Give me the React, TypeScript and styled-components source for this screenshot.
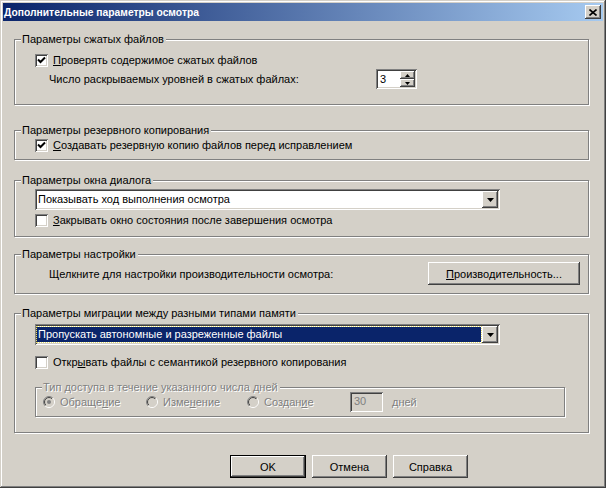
import React, { useId } from "react";
import styled, { createGlobalStyle, css } from "styled-components";

const GlobalStyle = createGlobalStyle`
  html, body {
    margin: 0;
    padding: 0;
    background: #d4d0c8;
  }
  body {
    font-family: "Liberation Sans", Arial, sans-serif;
    font-size: 11px;
    color: #000;
  }
`;

const raised = css`
  box-shadow: inset -1px -1px #404040, inset 1px 1px #fff,
    inset -2px -2px #808080, inset 2px 2px #d4d0c8;
`;

const sunken = css`
  box-shadow: inset 1px 1px #808080, inset -1px -1px #fff,
    inset 2px 2px #404040, inset -2px -2px #d4d0c8;
`;

const Window = styled.div`
  width: 606px;
  height: 488px;
  box-sizing: border-box;
  padding: 3px;
  background: #d4d0c8;
  box-shadow: inset -1px -1px #404040, inset 1px 1px #d4d0c8,
    inset -2px -2px #808080, inset 2px 2px #fff;
  display: flex;
  flex-direction: column;
`;

const TitleBar = styled.div`
  height: 18px;
  display: flex;
  align-items: center;
  justify-content: space-between;
  padding: 0 2px 0 1px;
  background: linear-gradient(to right, #0a246a, #a6caf0);
`;

const Title = styled.span`
  color: #fff;
  font-weight: bold;
  font-size: 10.3px;
`;

const CloseButton = styled.div`
  width: 16px;
  height: 14px;
  background: #d4d0c8;
  display: flex;
  align-items: center;
  justify-content: center;
  ${raised}
`;

const Content = styled.div`
  display: flex;
  flex-direction: column;
  padding: 18px 14px 0 11px;
`;

const Group = styled.div<{ $mt: number; $h: number; $w?: number }>`
  position: relative;
  box-sizing: border-box;
  margin-top: ${(p) => p.$mt}px;
  height: ${(p) => p.$h}px;
  width: ${(p) => (p.$w ? `${p.$w}px` : "auto")};
  border: 1px solid #808080;
  box-shadow: inset 1px 1px #fff, 1px 1px #fff;
  padding-left: ${(p) => (p.$w ? 7 : 20)}px;
  display: flex;
  flex-direction: column;
`;

const Legend = styled.span<{ $disabled?: boolean }>`
  position: absolute;
  top: -8px;
  left: 6px;
  padding: 0 2px 0 1px;
  line-height: 14px;
  background: #d4d0c8;
  color: ${(p) => (p.$disabled ? "#808080" : "#000")};
  text-shadow: ${(p) => (p.$disabled ? "1px 1px 0 #fff" : "none")};
`;

const CheckRow = styled.div<{ $mt: number }>`
  display: flex;
  align-items: center;
  gap: 5px;
  height: 16px;
  margin-top: ${(p) => p.$mt}px;
`;

const CheckBox = styled.div`
  width: 13px;
  height: 13px;
  box-sizing: border-box;
  background: #fff;
  display: flex;
  align-items: center;
  justify-content: center;
  ${sunken}
`;

const FieldRow = styled.div<{ $mt: number; $h: number }>`
  display: flex;
  align-items: center;
  height: ${(p) => p.$h}px;
  margin-top: ${(p) => p.$mt}px;
  padding-left: 14px;
`;

const FieldLabel = styled.span<{ $w: number }>`
  width: ${(p) => p.$w}px;
  flex: none;
`;

const U = styled.span`
  text-decoration: underline;
  text-underline-offset: 1px;
`;

const Spin = styled.div`
  width: 41px;
  height: 20px;
  box-sizing: border-box;
  background: #fff;
  padding: 2px;
  display: flex;
  ${sunken}
`;

const SpinValue = styled.span`
  flex: 1;
  padding-left: 2px;
  line-height: 16px;
`;

const SpinButtons = styled.div`
  width: 15px;
  display: flex;
  flex-direction: column;
`;

const SpinButton = styled.div`
  flex: 1;
  background: #d4d0c8;
  display: flex;
  align-items: center;
  justify-content: center;
  ${raised}
`;

const Combo = styled.div<{ $mt: number }>`
  width: 465px;
  height: 21px;
  box-sizing: border-box;
  margin-top: ${(p) => p.$mt}px;
  padding: 2px;
  background: #fff;
  display: flex;
  ${sunken}
`;

const ComboText = styled.div<{ $selected?: boolean }>`
  flex: 1;
  margin: 1px 1px 1px 0;
  padding-left: 1px;
  line-height: 15px;
  white-space: nowrap;
  background: ${(p) => (p.$selected ? "#0a246a" : "transparent")};
  color: ${(p) => (p.$selected ? "#fff" : "#000")};
  outline: ${(p) => (p.$selected ? "1px dotted #e8e070" : "none")};
`;

const ComboButton = styled.div`
  width: 16px;
  background: #d4d0c8;
  display: flex;
  align-items: center;
  justify-content: center;
  ${raised}
`;

const PushButton = styled.div<{ $w: number; $default?: boolean }>`
  width: ${(p) => p.$w}px;
  height: 23px;
  box-sizing: border-box;
  display: flex;
  align-items: center;
  justify-content: center;
  background: #d4d0c8;
  ${raised}
  ${(p) =>
    p.$default &&
    css`
      border: 1px solid #000;
    `}
`;

const RadioRow = styled.div`
  display: flex;
  align-items: center;
  height: 20px;
  margin-top: 4px;
`;

const RadioItem = styled.div<{ $w: number }>`
  width: ${(p) => p.$w}px;
  display: flex;
  align-items: center;
  gap: 5px;
`;

const DisabledText = styled.span`
  color: #808080;
  text-shadow: 1px 1px 0 #fff;
`;

const DaysInput = styled.div`
  width: 33px;
  height: 20px;
  box-sizing: border-box;
  padding: 3px 0 0 4px;
  background: #d4d0c8;
  color: #808080;
  ${sunken}
`;

const DaysLabel = styled(DisabledText)`
  margin-left: 9px;
`;

const ButtonRow = styled.div`
  display: flex;
  gap: 6px;
  margin-top: 22px;
  padding-left: 216px;
`;

function Check({ checked }: { checked: boolean }) {
  return (
    <CheckBox>
      {checked && (
        <svg width="9" height="9" viewBox="0 0 9 9">
          <path d="M1 3.5 L3.5 6 L8 1.5" stroke="#000" strokeWidth="2" fill="none" />
        </svg>
      )}
    </CheckBox>
  );
}

function Radio({ checked }: { checked: boolean }) {
  const id = useId().replace(/:/g, "");
  return (
    <svg width="12" height="12" viewBox="0 0 12 12">
      <defs>
        <linearGradient id={`o${id}`} x1="0" y1="0" x2="1" y2="1">
          <stop offset="0.5" stopColor="#808080" />
          <stop offset="0.5" stopColor="#fff" />
        </linearGradient>
        <linearGradient id={`i${id}`} x1="0" y1="0" x2="1" y2="1">
          <stop offset="0.5" stopColor="#404040" />
          <stop offset="0.5" stopColor="#d4d0c8" />
        </linearGradient>
      </defs>
      <circle cx="6" cy="6" r="5.5" fill="none" stroke={`url(#o${id})`} />
      <circle cx="6" cy="6" r="4.5" fill="#d4d0c8" stroke={`url(#i${id})`} />
      {checked && <circle cx="6" cy="6" r="2" fill="#808080" />}
    </svg>
  );
}

function Arrow({ w, h }: { w: number; h: number }) {
  return (
    <svg width={w} height={h} viewBox={`0 0 ${w} ${h}`}>
      <path d={`M0 0 H${w} L${w / 2} ${h} Z`} fill="#000" />
    </svg>
  );
}

export default function App() {
  return (
    <>
      <GlobalStyle />
      <Window>
        <TitleBar>
          <Title>Дополнительные параметры осмотра</Title>
          <CloseButton>
            <svg width="8" height="7" viewBox="0 0 8 7">
              <path d="M0.5 0.5 L7.5 6.5 M7.5 0.5 L0.5 6.5" stroke="#000" strokeWidth="1.6" />
            </svg>
          </CloseButton>
        </TitleBar>
        <Content>
          <Group $mt={0} $h={66}>
            <Legend>Параметры сжатых файлов</Legend>
            <CheckRow $mt={12}>
              <Check checked />
              <span>
                <U>П</U>роверять содержимое сжатых файлов
              </span>
            </CheckRow>
            <FieldRow $mt={1} $h={20}>
              <FieldLabel $w={327}>Число раскрываемых уровней в сжатых файлах:</FieldLabel>
              <Spin>
                <SpinValue>3</SpinValue>
                <SpinButtons>
                  <SpinButton>
                    <svg width="5" height="3" viewBox="0 0 5 3">
                      <path d="M0 3 H5 L2.5 0 Z" fill="#000" />
                    </svg>
                  </SpinButton>
                  <SpinButton>
                    <Arrow w={5} h={3} />
                  </SpinButton>
                </SpinButtons>
              </Spin>
            </FieldRow>
          </Group>

          <Group $mt={25} $h={30}>
            <Legend>Параметры резервного копирования</Legend>
            <CheckRow $mt={6}>
              <Check checked />
              <span>
                <U>С</U>оздавать резервную копию файлов перед исправлением
              </span>
            </CheckRow>
          </Group>

          <Group $mt={20} $h={57}>
            <Legend>Параметры окна диалога</Legend>
            <Combo $mt={8}>
              <ComboText>Показывать ход выполнения осмотра</ComboText>
              <ComboButton>
                <Arrow w={7} h={4} />
              </ComboButton>
            </Combo>
            <CheckRow $mt={2}>
              <Check checked={false} />
              <span>
                <U>З</U>акрывать окно состояния после завершения осмотра
              </span>
            </CheckRow>
          </Group>

          <Group $mt={17} $h={40}>
            <Legend>Параметры настройки</Legend>
            <FieldRow $mt={7} $h={23}>
              <FieldLabel $w={379}>Щелкните для настройки производительности осмотра:</FieldLabel>
              <PushButton $w={152}>
                <span>
                  <U>П</U>роизводительность...
                </span>
              </PushButton>
            </FieldRow>
          </Group>

          <Group $mt={19} $h={120}>
            <Legend>Параметры миграции между разными типами памяти</Legend>
            <Combo $mt={10}>
              <ComboText $selected>Пропускать автономные и разреженные файлы</ComboText>
              <ComboButton>
                <Arrow w={7} h={4} />
              </ComboButton>
            </Combo>
            <CheckRow $mt={9}>
              <Check checked={false} />
              <span>
                Откр<U>ы</U>вать файлы с семантикой резервного копирования
              </span>
            </CheckRow>
            <Group $mt={17} $h={30} $w={530}>
              <Legend $disabled>Тип доступа в течение указанного числа дней</Legend>
              <RadioRow>
                <RadioItem $w={103}>
                  <Radio checked />
                  <DisabledText>
                    Обраще<U>н</U>ие
                  </DisabledText>
                </RadioItem>
                <RadioItem $w={101}>
                  <Radio checked={false} />
                  <DisabledText>
                    Изме<U>н</U>ение
                  </DisabledText>
                </RadioItem>
                <RadioItem $w={103}>
                  <Radio checked={false} />
                  <DisabledText>
                    Создан<U>и</U>е
                  </DisabledText>
                </RadioItem>
                <DaysInput>30</DaysInput>
                <DaysLabel>
                  <U>д</U>ней
                </DaysLabel>
              </RadioRow>
            </Group>
          </Group>

          <ButtonRow>
            <PushButton $w={76} $default>
              OK
            </PushButton>
            <PushButton $w={75}>Отмена</PushButton>
            <PushButton $w={75}>Справка</PushButton>
          </ButtonRow>
        </Content>
      </Window>
    </>
  );
}
